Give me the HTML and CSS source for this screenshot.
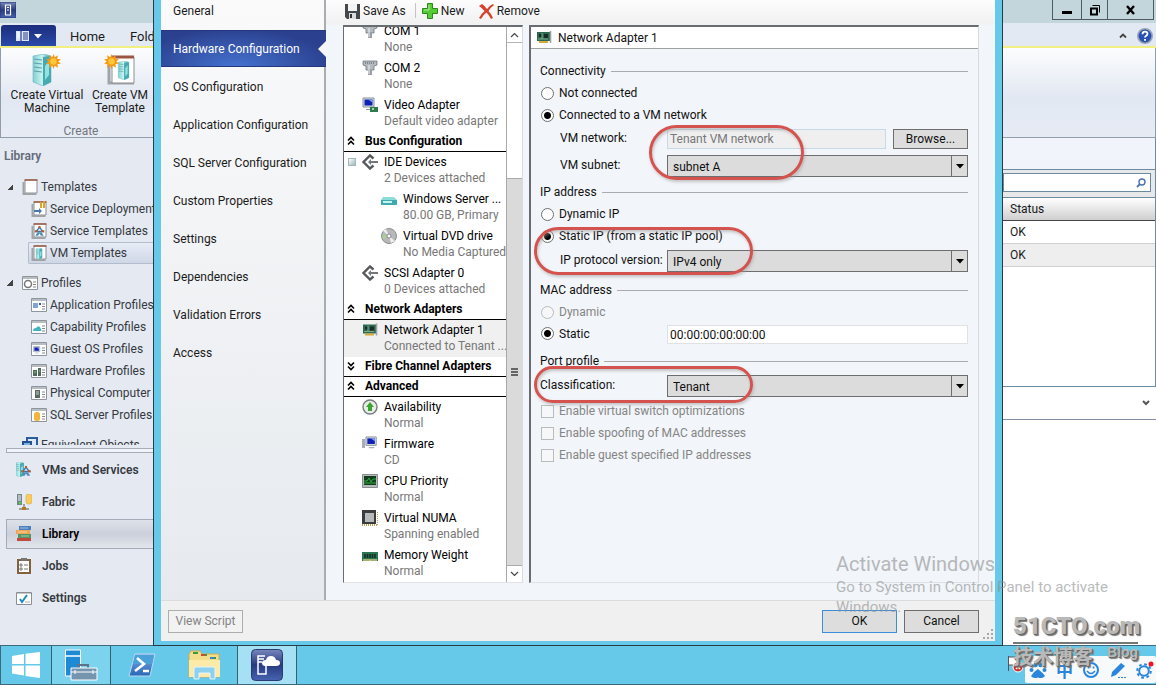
FILE: index.html
```html
<!DOCTYPE html>
<html lang="en">
<head>
<meta charset="utf-8">
<title>Hardware Configuration - Virtual Machine Manager</title>
<link rel="stylesheet" href="styles.css">
</head>
<body>
<svg class="defs" aria-hidden="true">
  <defs>
    <linearGradient id="teal" x1="0" x2="1"><stop offset="0" stop-color="#7fd0d4"/><stop offset=".5" stop-color="#c9f3f0"/><stop offset="1" stop-color="#3fa5ad"/></linearGradient>
    <linearGradient id="blueg" x1="0" y1="0" x2="0" y2="1"><stop offset="0" stop-color="#7aa7e6"/><stop offset="1" stop-color="#2a68b4"/></linearGradient>
    <linearGradient id="navyg" x1="0" y1="0" x2="0" y2="1"><stop offset="0" stop-color="#7887bd"/><stop offset=".5" stop-color="#273a80"/><stop offset="1" stop-color="#4763b0"/></linearGradient>
    <symbol id="star" viewBox="0 0 14 14"><path d="M7 0l1.2 3L11 1.200l-.4 3.400L14 5l-2.500 2L14 9l-3.300.4.5 3.400-3-1.800L7 14l-1.200-3-3 1.800.5-3.400L0 9l2.500-2L0 5l3.400-.4L3 1.200 5.800 3z" fill="#f39a14"/><circle cx="7" cy="7" r="3" fill="#ffc637"/></symbol>
    <symbol id="server" viewBox="0 0 20 32"><path d="M1 2L12 0l7 2v26l-8 4-10-4z" fill="url(#teal)" stroke="#6bb4b8" stroke-width=".6"/><path d="M11 3l8-1v26l-8 4z" fill="#45aab2"/><path d="M2 5l8 1M2 9l8 1M2 13l8 1M2 17l8 1" stroke="#5e9ea6"/><path d="M13 12l4-5v14l-4 5z" fill="#92e2df"/></symbol>
    <symbol id="page" viewBox="0 0 16 16"><path d="M3 1h12v13H3z" fill="#fff" stroke="#8b8f94"/><path d="M1.500 3v12h13" fill="none" stroke="#a0a4a8" stroke-width="2"/><path d="M2.500 1h13" stroke="#9b5b45" stroke-width="1.500"/></symbol>
    <symbol id="profile" viewBox="0 0 16 14"><path d="M.5.5h15v13H.5z" fill="#fff" stroke="#8f959c"/><path d="M1 2h14" stroke="#b8bdc2" stroke-width="2"/><path d="M11 6h3M11 8.500h3M11 11h3" stroke="#83898f"/></symbol>
    <symbol id="chevs-up" viewBox="0 0 8 10"><path d="M1 4.500l3-3 3 3M1 8.500l3-3 3 3" fill="none" stroke="#000" stroke-width="1.600"/></symbol>
    <symbol id="chevs-down" viewBox="0 0 8 10"><path d="M1 1.500l3 3 3-3M1 5.500l3 3 3-3" fill="none" stroke="#000" stroke-width="1.600"/></symbol>
    <symbol id="com" viewBox="0 0 16 16"><path d="M1 1h14v4l-3 1v4H4V6L1 5z" fill="#b4bac0" stroke="#70767c" stroke-width=".8"/><path d="M3 3h10" stroke="#4e555b" stroke-dasharray="1 1"/><path d="M6 10h4v5H6z" fill="#9aa0a6"/><path d="M7 5v9" stroke="#eef1f4"/></symbol>
    <symbol id="monitor" viewBox="0 0 16 16"><path d="M1 1h11v9H1z" fill="#d5dbe2" stroke="#8b939c"/><path d="M2.500 2.500h8v6h-8z" fill="#1120b4"/><path d="M6 2.500h4.500v3z" fill="#7f9cf2"/><path d="M4 12h6v1H4z" fill="#9198a0"/></symbol>
    <symbol id="bus" viewBox="0 0 16 16"><path d="M11.500 4.500L8 1.500 1.500 8 8 14.500l3.500-3" fill="none" stroke="#56595c" stroke-width="2.400"/><path d="M6 8l3-3v2h7v2H9v2z" fill="#73777b"/></symbol>
    <symbol id="nic" viewBox="0 0 16 13"><path d="M1 1h13v9H1z" fill="#2e6850"/><path d="M3 3h3v3H3zM8 3h4v4H8z" fill="#172e28"/><path d="M2 8h10M6 2v6" stroke="#7fad8c"/><path d="M3 11h9" stroke="#d3ac3a" stroke-width="2"/><path d="M14.500 0v12" stroke="#9ba2a6" stroke-width="1.600"/></symbol>
    <symbol id="people" viewBox="0 0 16 16"><path d="M8 2l5 6H3z" fill="none" stroke="#3d77a8" stroke-width="2"/><path d="M6.500 0h3v3h-3zM1 6h4v3H1zM11 6h4v3h-4z" fill="#b75b36"/><path d="M2 14l3-5h6l3 5h-4l-2-3-2 3z" fill="#4d8ebc"/></symbol>
    <symbol id="down" viewBox="0 0 8 5"><path d="M0 0h8L4 4.500z" fill="#000"/></symbol>
  </defs>
</svg>

<div class="screen">
  <div class="desktop">
    <div class="app">
      <header class="titlebar">
        <svg class="appicon" viewBox="0 0 16 16"><rect width="16" height="16" rx="1.500" fill="url(#navyg)" stroke="#223575"/><path d="M5.500 3h5v10h-5zM7 5.500h2M7 8h2" fill="none" stroke="#fff" stroke-width="1.200"/></svg>
        <div class="winbtns">
          <button class="wb" aria-label="Minimize"><svg width="12" height="12" viewBox="0 0 12 12"><path d="M1 7h10v3H1z"/></svg></button>
          <button class="wb restore" aria-label="Restore"><svg width="12" height="12" viewBox="0 0 12 12"><path d="M2 4.500h6v6H2z" fill="none" stroke="#000" stroke-width="2"/><path d="M3.500 1.500h7v7" fill="none" stroke="#000"/></svg></button>
          <button class="wb close" aria-label="Close"><svg width="12" height="12" viewBox="0 0 12 12"><path d="M2 2l7 8M9 2l-7 8" stroke="#000" stroke-width="2.400"/></svg></button>
        </div>
      </header>
      <nav class="tabs">
        <button class="filetab" aria-label="File menu"><svg width="27" height="12" viewBox="0 0 27 12"><path d="M1 1h13v10H1z" fill="#dfe6f7"/><path d="M2 3h3M2 5h3M2 7h3" stroke="#fff"/><path d="M6 1v10M8 3h5M8 5h5M8 7h5M8 9h5" stroke="#26408f" stroke-width="1.200"/><path d="M19 4h8l-4 4.500z" fill="#fff"/></svg></button>
        <button class="tab">Home</button><button class="tab">Folder</button>
        <span class="grow"></span>
        <button class="plain collapse" aria-label="Collapse ribbon"><svg width="10" height="8" viewBox="0 0 10 8"><path d="M2 5.500l3-3 3 3" fill="none" stroke="#444" stroke-width="1.800"/></svg></button>
        <button class="plain help" aria-label="Help"><svg width="16" height="16" viewBox="0 0 16 16"><circle cx="8" cy="8" r="7.200" fill="#2851b5" stroke="#9aa3b5" stroke-width="1.600"/><path d="M5.500 6.200q0-2.500 2.500-2.500t2.500 2.100q0 1.300-1.500 2.100-1 .6-1 1.500" fill="none" stroke="#fff" stroke-width="1.800"/><path d="M7.100 11h1.900v1.800H7.100z" fill="#fff"/></svg></button>
      </nav>
      <section class="ribbon">
        <div class="rgroup">
          <div class="ritems">
            <button class="rbtn"><svg width="30" height="32" viewBox="0 0 30 32"><use href="#server" width="20" height="32" x="0"/><use href="#star" x="14" y="0" width="15" height="15"/></svg><span>Create Virtual<br>Machine</span></button>
            <button class="rbtn"><svg width="32" height="32" viewBox="0 0 32 32"><path d="M5 6v23h25" fill="none" stroke="#a0a4a8" stroke-width="3"/><path d="M8 3h22v26H8z" fill="#fff" stroke="#8b8f94"/><path d="M8 3h22" stroke="#9a5642" stroke-width="3"/><use href="#server" x="13" y="7" width="13" height="19"/><use href="#star" x="0" y="0" width="15" height="15"/></svg><span>Create VM<br>Template</span></button>
          </div>
          <div class="rname">Create</div>
        </div>
      </section>
      <div class="body">
        <aside class="left">
          <div class="lefttitle">Library</div>
          <div class="tree">
            <a href="#" class="node top"><i class="tri"></i><svg><use href="#page"/></svg>Templates</a>
            <a href="#" class="node"><svg viewBox="0 0 16 16"><use href="#page"/><path d="M3 9h5v-2l3 3-3 3v-2H3z" fill="#4579af"/><path d="M10 1v6M13 0v7" stroke="#dda32b" stroke-width="2"/></svg>Service Deployment</a>
            <a href="#" class="node"><svg viewBox="0 0 16 16"><use href="#page"/><use href="#people" x="3" y="3" width="11" height="11"/></svg>Service Templates</a>
            <a href="#" class="node sel"><svg viewBox="0 0 16 16"><use href="#page"/><use href="#server" x="4" y="3" width="8" height="11"/></svg>VM Templates</a>
            <a href="#" class="node top second"><i class="tri"></i><svg viewBox="0 0 16 14"><use href="#profile"/><circle cx="6" cy="8" r="3.500" fill="#fff" stroke="#777" stroke-width="1.500"/></svg>Profiles</a>
            <a href="#" class="node"><svg viewBox="0 0 16 14"><use href="#profile"/><path d="M2 5h5v5H2z" fill="#7fa4d8"/><path d="M8 5h2v2H8z" fill="#315a9f"/></svg>Application Profiles</a>
            <a href="#" class="node"><svg viewBox="0 0 16 14"><use href="#profile"/><path d="M2 11q0-3 3-3 3-4 5 1 1 1 0 2z" fill="#43b3bd"/></svg>Capability Profiles</a>
            <a href="#" class="node"><svg viewBox="0 0 16 14"><use href="#profile"/><use href="#monitor" x="2" y="4" width="9" height="9"/></svg>Guest OS Profiles</a>
            <a href="#" class="node"><svg viewBox="0 0 16 14"><use href="#profile"/><path d="M2 6h4v6H2zM7 4h3v8H7z" fill="#516a5e"/><path d="M3 8h2M8 7h1" stroke="#8ed07a"/></svg>Hardware Profiles</a>
            <a href="#" class="node"><svg viewBox="0 0 16 14"><use href="#profile"/><path d="M4 4h5v8H4z" fill="#5b6962"/><path d="M5 6h3M5 8h3" stroke="#b9d7c7"/></svg>Physical Computer</a>
            <a href="#" class="node"><svg viewBox="0 0 16 14"><use href="#profile"/><rect x="3" y="4" width="6" height="9" rx="2.500" fill="#f2b43b"/></svg>SQL Server Profiles</a>
            <a href="#" class="node top second"><i class="tri none"></i><svg viewBox="0 0 16 16"><path d="M5 1h10v10H5z" fill="#dce8f7" stroke="#2c5a9f" stroke-width="2"/><path d="M1 5h8v9H1z" fill="#7cb0e3" stroke="#24508f" stroke-width="2"/></svg>Equivalent Objects</a>
          </div>
          <div class="splitter"></div>
          <nav class="spaces">
            <a href="#"><svg viewBox="0 0 16 16"><use href="#server" x="-2" y="0" width="11" height="15"/><use href="#people" x="4" y="4" width="12" height="11"/></svg>VMs and Services</a>
            <a href="#"><svg viewBox="0 0 16 16"><path d="M1 0h5v11H1z" fill="#78868a"/><path d="M2 2h3M2 4h3M2 6h3" stroke="#eef"/><path d="M3 9h2" stroke="#40d832" stroke-width="2"/><rect x="10" y="0" width="6" height="10" rx="2.500" fill="#f8cc5d" stroke="#d6a02c" stroke-width=".5"/><path d="M8 10v4M3 15h10" stroke="#888" stroke-width="1.500"/><path d="M6 13h4v3H6z" fill="#b47a22"/></svg>Fabric</a>
            <a href="#" class="on"><svg viewBox="0 0 16 16"><path d="M3 0h12v4H3z" fill="#4b80bd"/><path d="M0 4h14v4H0z" fill="#eda653"/><path d="M2 8h13v4H2z" fill="#549562"/><path d="M1 12h14v3H1z" fill="#c4483c"/><path d="M4 2h8M2 6h9M5 10h8" stroke="#fff" stroke-opacity=".5"/></svg>Library</a>
            <a href="#"><svg viewBox="0 0 16 16"><path d="M2 2h12v13H2z" fill="#fff" stroke="#84603c" stroke-width="2"/><path d="M5 0h6v3H5z" fill="#777"/><path d="M4 6h2v2H4zM4 10h2v2H4zM8 7h4M8 11h4" fill="none" stroke="#777"/></svg>Jobs</a>
            <a href="#"><svg viewBox="0 0 16 16"><path d="M.5 2.500h15v12H.5z" fill="#fff" stroke="#8b8f94"/><path d="M1 3h14" stroke="#8b8f94"/><path d="M4 9l2 3 5-7" fill="none" stroke="#2188c2" stroke-width="2"/><path d="M9 12h5" stroke="#aaa"/></svg>Settings</a>
          </nav>
        </aside>
        <section class="right">
          <div class="rpanel">
            <div class="searchbar"><label class="searchbox"><input type="text" aria-label="Search"><svg width="10" height="10" viewBox="0 0 10 10"><circle cx="6" cy="4" r="3" fill="none" stroke="#4c73b0" stroke-width="1.400"/><path d="M4 6L1 9" stroke="#4c73b0" stroke-width="1.800"/></svg></label></div>
            <table class="results"><thead><tr><th>Status</th></tr></thead><tbody><tr><td>OK</td></tr><tr><td>OK</td></tr></tbody></table>
          </div>
          <div class="rdetail"><button class="plain" aria-label="Expand details"><svg width="10" height="8" viewBox="0 0 10 8"><path d="M2 2l3 3 3-3" fill="none" stroke="#555" stroke-width="2"/></svg></button></div>
        </section>
      </div>
    </div>

    <div class="dialog" role="dialog" aria-label="VM template properties">
      <div class="dmain">
        <nav class="pages">
          <a href="#">General</a>
          <a href="#" class="current">Hardware Configuration<svg width="8" height="18" viewBox="0 0 8 18"><path d="M8 1v16L0 9z" fill="#f6f6f7"/></svg></a>
          <a href="#">OS Configuration</a>
          <a href="#">Application Configuration</a>
          <a href="#">SQL Server Configuration</a>
          <a href="#">Custom Properties</a>
          <a href="#">Settings</a>
          <a href="#">Dependencies</a>
          <a href="#">Validation Errors</a>
          <a href="#">Access</a>
        </nav>
        <div class="work">
          <div class="toolbar">
            <button><svg width="15" height="15" viewBox="0 0 15 15"><path d="M0 0h15v15H2l-2-2z" fill="#45484b"/><path d="M3 0h9v7H3z" fill="#f4f4f4"/><path d="M4 9h7v6H4z" fill="#d9dcdf"/><path d="M5 10h2v4H5z" fill="#333"/></svg>Save As</button>
            <span class="tsep"></span>
            <button><svg width="16" height="16" viewBox="0 0 16 16"><path d="M5.500.5h5v5h5v5h-5v5h-5v-5h-5v-5h5z" fill="#56cb36" stroke="#278b18"/><path d="M7 2v5H2" fill="none" stroke="#b2ee9a"/></svg>New</button>
            <button><svg width="15" height="15" viewBox="0 0 15 15"><path d="M0 2l3-2q3 2 5 5 3-4 6-5l1 1q-4 3-5.500 6 3 3 4.500 7l-2 1q-2-4-4.500-6.500Q4 11 2 15l-2-1q2-4 5.500-7Q3 4 0 2z" fill="#d9412c"/></svg>Remove</button>
          </div>
          <div class="panes">
            <div class="devices">
              <div class="devlist">
                <div class="dev"><svg><use href="#com"/></svg><p>COM 1<small>None</small></p></div>
                <div class="dev"><svg><use href="#com"/></svg><p>COM 2<small>None</small></p></div>
                <div class="dev"><svg viewBox="0 0 16 16"><use href="#monitor" x="0" y="0" width="16" height="16"/><path d="M8 10h8v5H8z" fill="#2e7a4d"/><path d="M10 11h2v2h-2z" fill="#a6d5a7"/></svg><p>Video Adapter<small>Default video adapter</small></p></div>
                <h3><svg><use href="#chevs-up"/></svg>Bus Configuration</h3>
                <div class="dev"><button class="fold" aria-label="Collapse IDE Devices"></button><svg><use href="#bus"/></svg><p>IDE Devices<small>2 Devices attached</small></p></div>
                <div class="dev sub"><svg viewBox="0 0 16 16"><path d="M2 6h11l3 3v5H0V9z" fill="#8edcd9"/><path d="M0 9h16v4q0 1-1 1H1q-1 0-1-1z" fill="#3fa9ad"/><path d="M2 10h9v2H2z" fill="#c4f4ef"/></svg><p>Windows Server ...<small>80.00 GB, Primary</small></p></div>
                <div class="dev sub"><svg viewBox="0 0 16 16"><circle cx="8" cy="8" r="7.500" fill="#b6b8b9" stroke="#8d8f91"/><path d="M8 8L2 3l3-2zM8 8l6 5-4 2z" fill="#eee"/><path d="M8 8L1 7l1 4z" fill="#a7d390"/><circle cx="8" cy="8" r="2" fill="#fff" stroke="#888"/></svg><p>Virtual DVD drive<small>No Media Captured</small></p></div>
                <div class="dev"><svg><use href="#bus"/></svg><p>SCSI Adapter 0<small>0 Devices attached</small></p></div>
                <h3><svg><use href="#chevs-up"/></svg>Network Adapters</h3>
                <div class="dev chosen"><svg><use href="#nic"/></svg><p>Network Adapter 1<small>Connected to Tenant ...</small></p></div>
                <h3><svg><use href="#chevs-down"/></svg>Fibre Channel Adapters</h3>
                <h3><svg><use href="#chevs-up"/></svg>Advanced</h3>
                <div class="dev"><svg viewBox="0 0 16 16"><circle cx="8" cy="8" r="7" fill="#e8ebe8" stroke="#777c80" stroke-width="1.400"/><path d="M8 3l4 5h-2v4H6V8H4z" fill="#37a82d"/></svg><p>Availability<small>Normal</small></p></div>
                <div class="dev"><svg viewBox="0 0 16 16"><use href="#monitor" x="3" y="0" width="15" height="15"/><path d="M0 3h3v9H0z" fill="#a8aeb3"/></svg><p>Firmware<small>CD</small></p></div>
                <div class="dev"><svg viewBox="0 0 16 16"><path d="M.5 1.500h15v13H.5z" fill="#b5babd" stroke="#888d90"/><path d="M2 3h12v9H2z" fill="#133c1c"/><path d="M2 8h3l2-3 2 4 2-3h3M2 10h12" fill="none" stroke="#2eae43"/></svg><p>CPU Priority<small>Normal</small></p></div>
                <div class="dev"><svg viewBox="0 0 16 16"><path d="M0 15h16V2" fill="none" stroke="#b9a15b" stroke-width="2" stroke-dasharray="1 1"/><path d="M0 0h14v14H0z" fill="#3c3d3f"/><path d="M3 3h9v9H3z" fill="#b7b9bb"/></svg><p>Virtual NUMA<small>Spanning enabled</small></p></div>
                <div class="dev"><svg viewBox="0 0 16 16"><path d="M0 5h16v9H9l-1-1-1 1H0z" fill="#2b7553"/><path d="M3 7v4M5.500 7v4M8 7v4M10.500 7v4M13 7v4" stroke="#142f25" stroke-width="1.600"/><path d="M1 13h14" stroke="#d1c57f" stroke-width="1.500"/></svg><p>Memory Weight<small>Normal</small></p></div>
              </div>
              <div class="scroll">
                <button aria-label="Scroll up"><svg width="9" height="6" viewBox="0 0 9 6"><path d="M1 5l3.500-3.500L8 5" fill="none" stroke="#444" stroke-width="1.200"/></svg></button>
                <div class="thumb"><i></i><i></i><i></i></div>
                <button aria-label="Scroll down"><svg width="9" height="6" viewBox="0 0 9 6"><path d="M1 1l3.500 3.500L8 1" fill="none" stroke="#444" stroke-width="1.200"/></svg></button>
              </div>
            </div>
            <form class="detail">
              <h2><svg width="16" height="13"><use href="#nic"/></svg>Network Adapter 1</h2>
              <div class="fields">
                <div class="legend">Connectivity</div>
                <label class="opt"><input type="radio" name="conn">Not connected</label>
                <label class="opt"><input type="radio" name="conn" checked>Connected to a VM network</label>
                <div class="row ind net"><label for="vmnet">VM network:</label><input id="vmnet" type="text" value="Tenant VM network" disabled><button type="button" class="btn">Browse...</button></div>
                <div class="row ind"><label for="subnet">VM subnet:</label><span class="combo"><select id="subnet"><option>subnet A</option></select><i><svg width="8" height="5"><use href="#down"/></svg></i></span></div>
                <div class="legend ipaddr">IP address</div>
                <label class="opt"><input type="radio" name="ip">Dynamic IP</label>
                <label class="opt"><input type="radio" name="ip" checked>Static IP (from a static IP pool)</label>
                <div class="row ind"><label for="proto">IP protocol version:</label><span class="combo"><select id="proto"><option>IPv4 only</option></select><i><svg width="8" height="5"><use href="#down"/></svg></i></span></div>
                <div class="legend gap">MAC address</div>
                <label class="opt off"><input type="radio" name="mac" disabled>Dynamic</label>
                <div class="row mac"><label class="opt"><input type="radio" name="mac" checked>Static</label><input type="text" aria-label="MAC address" value="00:00:00:00:00:00"></div>
                <div class="legend gap">Port profile</div>
                <div class="row"><label for="class">Classification:</label><span class="combo"><select id="class"><option>Tenant</option></select><i><svg width="8" height="5"><use href="#down"/></svg></i></span></div>
                <label class="opt off"><input type="checkbox" disabled>Enable virtual switch optimizations</label>
                <label class="opt off"><input type="checkbox" disabled>Enable spoofing of MAC addresses</label>
                <label class="opt off"><input type="checkbox" disabled>Enable guest specified IP addresses</label>
              </div>
              <div class="mark m1"></div><div class="mark m2"></div><div class="mark m3"></div>
            </form>
          </div>
        </div>
      </div>
      <footer class="dfoot">
        <button class="btn ghost" disabled>View Script</button>
        <span class="grow"></span>
        <button class="btn ok">OK</button><button class="btn">Cancel</button>
        <svg class="grip" width="11" height="11" viewBox="0 0 11 11"><path d="M8 0h2v2H8zM4 4h2v2H4zM8 4h2v2H8zM0 8h2v2H0zM4 8h2v2H4zM8 8h2v2H8z" fill="#a9a9a9"/></svg>
      </footer>
    </div>

    <div class="activate"><b>Activate Windows</b>Go to System in Control Panel to activate<br>Windows.</div>
  </div>

  <footer class="taskbar">
    <button class="task start" aria-label="Start"><svg width="28" height="26" viewBox="0 0 28 26"><path d="M0 4l12-2v10H0zM13.500 1.800L28 0v12H13.500zM0 13.500h12v10l-12-2zM13.500 13.500H28V26l-14.500-2z" fill="#fff"/></svg></button>
    <button class="task open" aria-label="Server Manager"><svg width="34" height="32" viewBox="0 0 34 32"><path d="M1.500 1h15v26h-15z" fill="#1e8ad6" stroke="#fff"/><path d="M1 7h16" stroke="#fff" stroke-width="1.500"/><path d="M14 19v-3h10v3" fill="none" stroke="#5f7386" stroke-width="2"/><path d="M7 19h26v12H7z" fill="#7594ad" stroke="#fff"/><path d="M7 23h26M11 21v4M29 21v4" stroke="#fff"/></svg></button>
    <button class="task" aria-label="PowerShell"><svg width="28" height="24" viewBox="0 0 28 24"><path d="M7 1h20l-5 22H1z" fill="url(#blueg)" stroke="#b9d9f2"/><path d="M7 2h19l-2 9H5z" fill="#4ba0d7"/><path d="M9 5l7 6-9 7M15 18h6" fill="none" stroke="#fff" stroke-width="2.600"/></svg></button>
    <button class="task" aria-label="File Explorer"><svg width="33" height="30" viewBox="0 0 33 30"><path d="M1 4l2-3h9l2 3h17v23H1z" fill="#f4dd8b" stroke="#d2ac4e"/><path d="M1 10h31v17H1z" fill="#fbeaa8"/><path d="M5 3h5M13 5h6M22 8h6" stroke="#3a9a42" stroke-width="2"/><path d="M13 5h4" stroke="#cf4b33" stroke-width="2"/><path d="M22 8h4" stroke="#3f84c8" stroke-width="2"/><path d="M6 29V19q0-2 2-2h17q2 0 2 2v10h-5v-6H11v6z" fill="#8dd0ef" stroke="#e3f6ff"/></svg></button>
    <button class="task open lit" aria-label="Virtual Machine Manager"><svg width="32" height="32" viewBox="0 0 32 32"><rect x=".5" y=".5" width="31" height="31" rx="4" fill="url(#navyg)" stroke="#2b3a70"/><path d="M14 7H7v18h8v-9M7 10h6M7 13h4" fill="none" stroke="#fff" stroke-width="1.500"/><path d="M14 17q-3 0-3-3t4-3q1-4 5-4 4 0 5 4 4 0 4 3t-4 3z" fill="#fff"/></svg></button>
    <span class="grow"></span>
    <svg class="flag" width="16" height="20" viewBox="0 0 16 20"><path d="M1.500 2v15M2 3h10v8H2" fill="#fff" stroke="#555"/><circle cx="11" cy="13" r="5" fill="#d3322b" stroke="#fff"/><path d="M9 11l4 4M13 11l-4 4" stroke="#fff" stroke-width="1.500"/></svg>
    <div class="ime">
      <svg viewBox="0 0 18 18"><path d="M9 8q5 4 7 7-2 3-7 1.500Q4 18 2 15q2-4 7-7z" fill="#2a86dc"/><circle cx="6.500" cy="4" r="2.200" fill="#2a86dc"/><circle cx="11.500" cy="4" r="2.200" fill="#2a86dc"/><circle cx="2.500" cy="9" r="2" fill="#2a86dc"/><circle cx="15.500" cy="9" r="2" fill="#2a86dc"/></svg>
      <span>中</span>
      <svg viewBox="0 0 18 18"><circle cx="9" cy="9" r="7" fill="none" stroke="#2a86dc" stroke-width="2"/><path d="M6.500 5.500v2M11.500 5.500v2M5 10q4 5 8 0" fill="none" stroke="#2a86dc" stroke-width="1.600"/></svg>
      <svg viewBox="0 0 18 18"><path d="M2 16l1-5L12 2l4 3-9 9z" fill="#2a86dc"/><path d="M9 16.500h8" stroke="#2a86dc" stroke-dasharray="2 1"/></svg>
      <svg viewBox="0 0 18 18"><circle cx="8" cy="10" r="4.800" fill="none" stroke="#2a86dc" stroke-width="2"/><circle cx="8" cy="10" r="6.800" fill="none" stroke="#2a86dc" stroke-width="2" stroke-dasharray="2.700 2.640"/><circle cx="15" cy="3" r="2.500" fill="#f0141e"/></svg>
    </div>
  </footer>

  <div class="stamp"><div class="site">51CTO.com</div><div class="sub2"><span>技术博客</span><em>Blog</em></div></div>
</div>
</body>
</html>
```
FILE: styles.css
```css
* { box-sizing: border-box; }
body { margin: 0; font: 12px/16px Roboto, "Noto Sans CJK SC", sans-serif; color: #1b1b1b; }
button, input, select { font: inherit; color: inherit; margin: 0; }
button { padding: 0; border: 0; background: none; }
a { color: inherit; text-decoration: none; }
svg { flex: none; }
p, h2, h3 { margin: 0; font: inherit; }
.defs { position: absolute; width: 0; height: 0; }
.grow { flex: 1; }
.screen { position: relative; height: 100vh; display: flex; flex-direction: column; overflow: hidden; }
.desktop { position: relative; flex: 1; min-height: 0; }

/* background application */
.app { height: 100%; display: flex; flex-direction: column; background: #e4e9f2; }
.titlebar { height: 23px; flex: none; display: flex; justify-content: space-between; background: #c3d6dc; }
.appicon { width: 16px; height: 16px; margin-top: 2px; }
.winbtns { display: flex; height: 20px; margin-right: 2px; border: solid #4e5a60; border-width: 0 1px 1px; }
.wb { width: 28px; display: grid; place-items: center; }
.wb + .wb { border-left: 1px solid #4e5a60; }
.wb.restore { width: 26px; }
.wb.close { width: 46px; }
.tabs { height: 25px; flex: none; display: flex; padding: 2px 0 0 1px; background: #e3e9f3; border-bottom: 2px solid #f0ef80; }
.filetab { width: 55px; display: grid; place-items: center; background: linear-gradient(#1b2c7c, #2a4ba9); border-radius: 3px 3px 0 0; }
.tab { font-size: 13px; line-height: 16px; padding: 2px 0 0 14px; margin-right: 11px; }
.plain { display: grid; place-items: center; }
.collapse { margin-right: 9px; }
.help { margin-right: 3px; align-self: center; }
.ribbon { height: 90px; flex: none; background: linear-gradient(#fcfdfe, #e2e8f2 55%, #e6ebf4); border: solid #929dac; border-width: 0 1px 1px; }
.rgroup { width: 160px; height: 100%; display: flex; flex-direction: column; padding: 6px 4px 0; }
.ritems { display: grid; grid-template-columns: 84px 62px; }
.rbtn { display: flex; flex-direction: column; align-items: center; gap: 3px; line-height: 13px; white-space: nowrap; }
.rname { text-align: center; color: #71767f; margin-top: 8px; }
.body { flex: 1; min-height: 0; display: grid; grid-template-columns: 153px 1fr 153px; }
.left { grid-column: 1; display: flex; flex-direction: column; overflow: hidden; white-space: nowrap; color: #36393e; min-height: 0; }
.lefttitle { padding: 10px 4px 12px; color: #656b78; font-weight: 600; }
.tree { height: 269px; overflow: hidden; flex: none; }
.node { height: 22px; display: flex; align-items: center; gap: 3px; margin-left: 28px; padding-left: 3px; }
.node svg { width: 16px; height: 16px; }
.node.top { margin-left: 7px; padding-left: 0; }
.node.second { margin-top: 8px; }
.node.sel { background: linear-gradient(#e7ecf6, #cfd7e6); border: 1px solid #b3bccc; border-right: 0; padding-left: 2px; border-radius: 2px 0 0 2px; }
.tri { width: 6px; height: 6px; margin-right: 6px; background: linear-gradient(135deg, transparent 50%, #444 50%); }
.tri.none { background: none; }
.splitter { height: 5px; flex: none; margin: 3px 0 0 6px; border: 1px solid #a6adb8; border-right: 0; background: #f0f3f9; }
.spaces { padding: 2px 0 0 6px; }
.spaces a { height: 30px; margin-bottom: 2px; padding-left: 9px; display: flex; align-items: center; gap: 10px; font-weight: 600; border: 1px solid transparent; border-right: 0; }
.spaces a svg { width: 16px; height: 16px; }
.spaces .on { color: #000; border-color: #a4acb9; background: linear-gradient(#dde2ea, #cbd0da 50%, #e2e6ec); }
.right { grid-column: 3; display: flex; flex-direction: column; background: #fff; min-height: 0; }
.rpanel { height: 249px; border: solid #6c8aa0; border-width: 0 1px 1px 0; flex: none; }
.searchbar { padding: 35px 4px 5px 0; background: linear-gradient(#f1f5fb 31px, #6c8aa0 31px, #6c8aa0 32px, #e6e8ea 32px); border-bottom: 1px solid #6c8aa0; }
.searchbox { height: 19px; display: flex; align-items: center; background: #fff; border: 1px solid #6c8aa0; padding-right: 4px; }
.searchbox input { flex: 1; min-width: 0; border: 0; background: none; padding: 0 4px; outline: 0; height: 15px; }
.results { width: 100%; border-spacing: 0; }
.results th { height: 23px; padding: 0 7px; text-align: left; font-weight: 400; background: linear-gradient(#fff, #cfcfcf); border-bottom: 1px solid #444; }
.results td { height: 23px; padding: 0 7px; border-bottom: 1px solid #d0d0d0; }
.results tr:nth-child(2) td { background: #eee; }
.rdetail { height: 33px; display: flex; justify-content: flex-end; align-items: center; padding-right: 5px; border-bottom: 1px solid #8091a5; }

/* properties dialog */
.dialog { position: absolute; inset: 0 154px; display: flex; flex-direction: column; background: #f0f0f0; border: solid #66c9e9; border-width: 0 7px 4px; outline: 1px solid #263c46; }
.dmain { flex: 1; min-height: 0; display: grid; grid-template-columns: 165px 1fr; border-bottom: 1px solid #d9dcdf; }
.pages { background: linear-gradient(#fafafb, #f4f5f7 30%, #e6eaee); border-right: 2px solid #a9acb0; }
.pages a { height: 38px; display: flex; align-items: center; justify-content: space-between; padding-left: 12px; white-space: nowrap; }
.pages a:first-child { height: 30px; padding-bottom: 8px; }
.pages .current { height: 37px; margin-bottom: 1px; color: #fff; background: radial-gradient(ellipse at 45% 100%, #4572cf, #2b418f 75%); border: solid #24377f; border-width: 1px 0; margin-right: -2px; }
.work { display: flex; flex-direction: column; min-width: 0; min-height: 0; background: linear-gradient(#fdfdfd, #f1f1f1 24px, #f2f5f9 25px); padding: 0 16px 17px 17px; }
.toolbar { height: 25px; flex: none; display: flex; align-items: flex-start; padding: 3px 0 0 2px; }
.toolbar button { display: flex; align-items: center; gap: 3px; height: 16px; margin-right: 14px; }
.toolbar button:first-child { margin-right: 9px; }
.tsep { width: 1px; height: 15px; background: #c4c4c4; margin-right: 6px; }
.panes { flex: 1; min-height: 0; display: grid; grid-template-columns: 180px 1fr; gap: 6px; }
.devices { display: flex; min-height: 0; background: #fff; border: solid; border-color: #696c70 #d9dadc #e2e3e5 #696c70; border-width: 2px 1px 1px; }
.devlist { flex: 1; min-width: 0; overflow: hidden; display: flex; flex-direction: column; justify-content: flex-end; color: #000; white-space: nowrap; }
.dev { height: 37px; flex: none; display: flex; position: relative; padding: 2px 0 0 18px; gap: 6px; }
.dev > svg { width: 16px; height: 16px; }
.dev small { display: block; font-size: 12px; color: #777; }
.dev.sub { padding-left: 37px; }
.dev.chosen { background: #f0f0f0; }
.fold { position: absolute; left: 4px; top: 6px; width: 8px; height: 8px; border: 1px solid #a4b8bc; background: linear-gradient(135deg, #fff, #9db7bd); }
h3 { height: 20px; flex: none; display: flex; align-items: center; gap: 10px; padding: 0 0 1px 3px; font-weight: 700; border-bottom: 1px solid #000; }
h3 svg { width: 8px; height: 10px; }
.scroll { width: 16px; flex: none; display: flex; flex-direction: column; background: #fff; border-left: 1px solid #a9a9a9; }
.scroll button { height: 16px; flex: none; display: grid; place-items: center; border: solid #b4b4b4; border-width: 0 0 1px; background: #fff; }
.scroll button:last-child { border-width: 0; }
.thumb { flex: 1; margin-top: 135px; display: flex; flex-direction: column; justify-content: center; align-items: center; gap: 1px; background: #dadada; border: solid #a9a9a9; border-width: 1px 0; }
.thumb i { width: 7px; height: 2px; background: #666; }
.detail { position: relative; min-width: 0; border: solid; border-color: #696c70 #d9dadc #dfe1e3 #696c70; border-width: 2px 1px 1px 2px; color: #111; background: #f2f5f9; }
h2 { height: 22px; display: flex; align-items: center; gap: 6px; padding-left: 5px; background: #fff; border-bottom: 1px solid #a0a0a0; }
.fields { padding: 11px 10px 0 9px; }
.legend { height: 22px; display: flex; align-items: center; gap: 5px; }
.legend::after { content: ""; flex: 1; height: 1px; background: #a9abad; }
.legend.ipaddr { margin-top: 1px; }
.legend.gap { margin-top: 4px; }
.opt { height: 22px; display: flex; align-items: center; gap: 5px; }
.opt.off { color: #858585; }
input[type=radio], input[type=checkbox] { appearance: none; width: 13px; height: 13px; margin-left: 1px; border: 1px solid #707070; background: #fff; }
input[type=radio] { border-radius: 50%; }
input[type=radio]:checked { background: radial-gradient(circle, #000 3px, #fff 4px); }
input:disabled { border-color: #bbb; background: #f6f7f8; }
.row { display: grid; grid-template-columns: 127px 1fr; min-height: 28px; align-items: center; white-space: nowrap; }
.row > label { padding-bottom: 2px; }
.row.ind > label { padding-left: 20px; }
.row.net { grid-template-columns: 127px 1fr 75px; min-height: 26px; }
.row.mac { min-height: 23px; }
.net input { margin-right: 7px; min-width: 0; height: 20px; padding: 0 2px; border: 1px solid #c5d9e8; color: #777; background: #efefef; }
.mac input[type=text] { min-width: 0; height: 19px; padding: 0 2px; border: 1px solid #e0e1e5; background: #fff; }
.combo { display: grid; height: 22px; }
.combo > * { grid-area: 1 / 1; }
.combo select { appearance: none; width: 100%; border: 1px solid #6e6e6e; border-radius: 0; background: #dcdcdc; padding: 1px 20px 0 5px; color: #111; }
.combo i { justify-self: end; width: 17px; display: grid; place-items: center; border-left: 1px solid #6e6e6e; pointer-events: none; }
.btn { width: 75px; height: 20px; border: 1px solid #6e6e6e; background: #dddddd; color: #111; }
.mark { position: absolute; border: 3px solid #d4534e; border-radius: 28px; box-shadow: 1px 2px 3px #9998, inset 1px 2px 3px #9998; pointer-events: none; }
.m1 { left: 118px; top: 98px; width: 155px; height: 55px; }
.m2 { left: 3px; top: 200px; width: 219px; height: 48px; }
.m3 { left: 3px; top: 339px; width: 219px; height: 37px; }
.dfoot { position: relative; height: 40px; flex: none; display: flex; align-items: center; gap: 7px; padding: 0 16px 0 7px; }
.dfoot .btn { height: 23px; }
.dfoot .ok { border-color: #3c8edb; }
.dfoot .ghost { border-color: #adadad; background: #f2f2f2; color: #838383; }
.grip { position: absolute; right: 1px; bottom: 1px; }

/* watermarks */
.activate { position: absolute; left: 836px; top: 552px; font-size: 15px; line-height: 20px; color: #8d8f91; opacity: .6; white-space: nowrap; pointer-events: none; }
.activate b { display: block; font-size: 20px; line-height: 25px; font-weight: 400; }
.stamp { position: absolute; right: 18px; bottom: 17px; width: 125px; color: #b9b9b9; text-shadow: 1px 1px 0 #666, 2px 2px 1px #777; font-weight: 700; pointer-events: none; }
.site { font: 900 24px/32px Roboto, sans-serif; border-bottom: 2px solid #777; white-space: nowrap; }
.sub2 { display: flex; justify-content: space-between; font: 700 20px/24px "Noto Sans CJK SC", sans-serif; }
.sub2 em { font: 700 14px/16px "Liberation Sans", sans-serif; }

/* taskbar */
.taskbar { height: 40px; flex: none; display: flex; background: #66c9e9; border: 1px solid #3c6a7c; border-right: 0; }
.task { width: 62px; display: grid; place-items: center; }
.task.start { width: 50px; }
.task.open { width: 60px; background: #7cd3ee; border: solid #37606f; border-width: 0 1px; }
.task.lit { background: #a5e0f5; margin-left: 2px; }
.flag { margin: 8px 2px 0 0; }
.ime { height: 27px; margin-top: 10px; padding: 0 2px 0 4px; width: 131px; display: flex; align-items: center; justify-content: space-between; background: #f8f9fb; border-radius: 2px; color: #2a86dc; }
.ime svg { width: 18px; height: 18px; }
.ime span { font: 700 17px/20px "Noto Sans CJK SC", sans-serif; }
```
